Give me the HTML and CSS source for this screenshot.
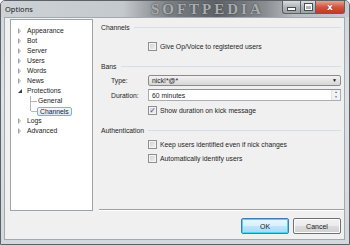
FILE: index.html
```html
<!DOCTYPE html>
<html lang="en">
<head>
  <meta charset="UTF-8" />
  <title>Options</title>
  <link rel="stylesheet" href="styles.css">
</head>
<body>
  <div class="window">
    <div class="titlebar">
      <span class="title">Options</span>
      <span class="watermark">SOFTPEDIA</span>
      <div class="caption-buttons">
        <span class="cap min"><i></i></span>
        <span class="cap max"><i></i></span>
        <span class="cap close">x</span>
      </div>
    </div>

    <div class="client">
      <ul class="tree">
        <li><span class="arrow"></span>Appearance</li>
        <li><span class="arrow"></span>Bot</li>
        <li><span class="arrow"></span>Server</li>
        <li><span class="arrow"></span>Users</li>
        <li><span class="arrow"></span>Words</li>
        <li><span class="arrow"></span>News</li>
        <li><span class="arrow open"></span>Protections</li>
        <li class="child"><span class="branch"></span>General</li>
        <li class="child last"><span class="branch"></span><span class="selected">Channels</span></li>
        <li><span class="arrow"></span>Logs</li>
        <li><span class="arrow"></span>Advanced</li>
      </ul>

      <div class="panel">
        <div class="group-title">Channels</div>
        <label class="check-row first"><span class="check"></span>Give Op/Voice to registered users</label>

        <div class="group-title">Bans</div>
        <div class="form">
          <span class="label">Type:</span>
          <div class="combo">nick!*@*<span class="drop">&#9660;</span></div>
          <span class="label">Duration:</span>
          <div class="input">60 minutes<span class="spin"><b>&#9650;</b><b>&#9660;</b></span></div>
        </div>
        <label class="check-row"><span class="check checked">&#10003;</span>Show duration on kick message</label>

        <div class="group-title auth">Authentication</div>
        <label class="check-row keep"><span class="check"></span>Keep users identified even if nick changes</label>
        <label class="check-row"><span class="check"></span>Automatically identify users</label>

        <div class="footer">
          <button class="btn default">OK</button>
          <button class="btn">Cancel</button>
        </div>
      </div>
    </div>
  </div>
</body>
</html>
```

FILE: styles.css
```css
body {
  margin: 0;
  font-family: "Liberation Sans", Arial, sans-serif;
  font-size: 6.8px;
  color: #1e1e1e;
  background: #fff;
}
.window {
  width: 350px;
  height: 245px;
  box-sizing: border-box;
  border: 1px solid #5c6166;
  border-radius: 5px 5px 0 0;
  background: linear-gradient(to bottom, #cfd5da, #dde2e6 40%, #d3d8dc);
  display: flex;
  flex-direction: column;
  overflow: hidden;
}
.titlebar {
  height: 16px;
  display: flex;
  align-items: flex-start;
  overflow: hidden;
  background: linear-gradient(to right, #cdd2d6 0%, #c4c9cd 35%, #7d8185 48%, #5e6266 62%, #8a8e92 76%, #b7bcc0 84%, #c7ccd0 100%);
}
.title {
  font-family: "Noto Sans", sans-serif;
  font-size: 7.5px;
  color: #222;
  margin: 3px 0 0 4px;
}
.watermark {
  font-family: "Liberation Serif", serif;
  font-weight: bold;
  font-size: 15px;
  letter-spacing: 3px;
  color: #a9adb1;
  text-shadow: 0 0 2px #3a3d40;
  margin: 0 0 0 118px;
  line-height: 16px;
}
.caption-buttons {
  margin-left: auto;
  margin-right: 4px;
  display: flex;
  height: 13px;
}
.cap {
  box-sizing: border-box;
  height: 13px;
  border: 1px solid #5e6165;
  border-top: none;
  background: linear-gradient(to bottom, #d9dde1, #b0b5ba 50%, #9da2a7);
  display: flex;
  align-items: center;
  justify-content: center;
}
.cap.min {
  width: 18px;
  border-radius: 0 0 0 3px;
  border-right: none;
}
.cap.min i {
  width: 7px;
  height: 2px;
  margin-top: 4px;
  background: #fff;
  border: 1px solid #4a4d50;
}
.cap.max {
  width: 15px;
  border-right: none;
}
.cap.max i {
  width: 5px;
  height: 3px;
  border: 1px solid #fff;
  border-top-width: 2px;
  outline: 1px solid #4a4d50;
}
.cap.close {
  width: 30px;
  border-radius: 0 0 3px 0;
  background: linear-gradient(to bottom, #e8a293, #d0563f 50%, #c03a24);
  color: #fff;
  font-family: "DejaVu Sans", sans-serif;
  font-weight: bold;
  font-size: 9px;
  line-height: 10px;
  text-shadow: 0 0 1px #5a1208;
}
.client {
  flex: 1;
  margin: 0 4px 4px 3px;
  background: #f0f0f0;
  border: 1px solid #a3a9ae;
  display: flex;
  padding: 1px 0 0 5px;
}
.tree {
  list-style: none;
  margin: 0;
  padding: 6px 0 0 0;
  width: 83px;
  height: 192px;
  box-sizing: border-box;
  background: #fff;
  border: 1px solid #9da3a8;
  flex-shrink: 0;
}
.tree li {
  height: 10px;
  line-height: 10px;
  display: flex;
  align-items: center;
  padding-left: 7px;
  color: #1e1e1e;
}
.arrow {
  width: 0;
  height: 0;
  border-left: 3px solid #a0a0a0;
  border-top: 3px solid transparent;
  border-bottom: 3px solid transparent;
  margin-right: 6px;
  position: relative;
}
.arrow::after {
  content: "";
  position: absolute;
  left: -2px;
  top: -1px;
  border-left: 1px solid #fff;
  border-top: 1px solid transparent;
  border-bottom: 1px solid transparent;
}
.arrow.open {
  border: none;
  width: 0;
  height: 0;
  border-right: 4px solid #3c3c3c;
  border-top: 4px solid transparent;
  margin-right: 5px;
}
.arrow.open::after {
  display: none;
}
.tree li.child {
  padding-left: 19px;
}
.branch {
  width: 7px;
  height: 10px;
  border-left: 1px solid #b8b8b8;
  position: relative;
}
.branch::after {
  content: "";
  position: absolute;
  left: 0;
  top: 5px;
  width: 6px;
  border-top: 1px solid #b8b8b8;
}
.child.last .branch {
  height: 5px;
  align-self: flex-start;
}
.selected {
  box-sizing: border-box;
  height: 9px;
  line-height: 7px;
  padding: 0 2px;
  margin-left: -1px;
  border: 1px solid #84acdd;
  border-radius: 2px;
  background: linear-gradient(to bottom, #f2f8fe, #dceafb);
}
.panel {
  flex: 1;
  margin-left: 6px;
  margin-right: 3px;
  display: flex;
  flex-direction: column;
}
.group-title {
  display: flex;
  align-items: center;
  height: 10px;
  margin-top: 3px;
  padding-left: 2px;
  color: #1e1e1e;
}
.group-title::after {
  content: "";
  flex: 1;
  margin-left: 4px;
  border-top: 1px solid #d5dfe5;
}
.check-row {
  display: flex;
  align-items: center;
  height: 10px;
  padding-left: 49px;
  margin-top: 4px;
}
.check-row.first {
  margin-top: 9px;
  margin-bottom: 7px;
}
.check {
  box-sizing: border-box;
  width: 9px;
  height: 9px;
  margin-right: 3px;
  border: 1px solid #8f8f8f;
  background: linear-gradient(135deg, #cfcfcf, #f4f4f4);
  box-shadow: inset 0 0 0 1px #f4f4f4;
  display: flex;
  align-items: center;
  justify-content: center;
  font-family: "DejaVu Sans", sans-serif;
  font-size: 8px;
  font-weight: bold;
  color: #3f57a0;
  line-height: 9px;
}
.form {
  display: grid;
  grid-template-columns: 37px 1fr;
  row-gap: 3px;
  align-items: center;
  padding-left: 12px;
  margin-top: 4px;
}
.label {
  color: #1e1e1e;
}
.combo {
  box-sizing: border-box;
  height: 11px;
  border: 1px solid #8b8b8b;
  border-radius: 2px;
  background: linear-gradient(to bottom, #f3f3f3, #e4e4e4 50%, #d6d6d6);
  padding-left: 3px;
  display: flex;
  align-items: center;
  line-height: 9px;
}
.drop {
  margin-left: auto;
  margin-right: 3px;
  font-size: 5px;
  color: #111;
}
.input {
  box-sizing: border-box;
  height: 12px;
  border: 1px solid #abadb3;
  border-top-color: #8e9095;
  background: #fff;
  padding-left: 3px;
  display: flex;
  align-items: center;
}
.spin {
  margin-left: auto;
  width: 8px;
  height: 10px;
  display: flex;
  flex-direction: column;
  border-left: 1px solid #e2e3e5;
}
.spin b {
  flex: 1;
  font-size: 3px;
  line-height: 5px;
  text-align: center;
  color: #556;
  font-weight: normal;
  background: #f1f2f4;
}
.group-title.auth {
  margin-top: 10px;
}
.check-row.keep {
  margin-top: 4px;
}
.footer {
  margin-top: auto;
  border-top: 1px solid #a0a0a0;
  box-shadow: inset 0 1px 0 #fff;
  display: flex;
  justify-content: flex-end;
  gap: 4px;
  padding: 8px 3px 5px 0;
  margin-right: -3px;
}
.btn {
  box-sizing: border-box;
  width: 48px;
  height: 16px;
  font-family: "Liberation Sans", Arial, sans-serif;
  font-size: 7px;
  color: #1e1e1e;
  border: 1px solid #707070;
  border-radius: 2px;
  background: linear-gradient(to bottom, #f2f2f2, #ebebeb 50%, #dddddd 51%, #cfcfcf);
  box-shadow: inset 0 0 0 1px #fcfcfc;
  padding: 0;
}
.btn.default {
  border-color: #3c7fb1;
  background: linear-gradient(to bottom, #eaf6fd, #d9f0fc 50%, #bee6fd 51%, #a7d9f5);
  box-shadow: inset 0 0 0 1px #48d4f6;
}
```
